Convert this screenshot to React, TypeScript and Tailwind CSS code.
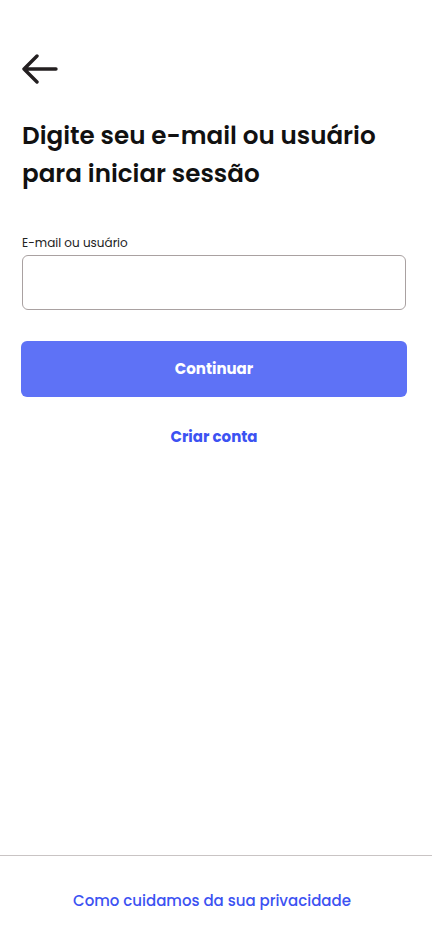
export default function App() {
  return (
    <div className="min-h-screen bg-white flex flex-col font-['Poppins','Inter',sans-serif] text-[#111]">
      <div className="flex-1 pl-[21px] pr-[25px] pt-[54px]">
        <button className="block w-[36px] h-[32px] ml-[1px]" aria-label="Voltar">
          <svg width="36" height="32" viewBox="0 0 36 32" fill="none">
            <path
              d="M2 15h32M15 2L2 15l13 13"
              stroke="#231f20"
              strokeWidth="3.4"
              strokeLinecap="round"
              strokeLinejoin="round"
            />
          </svg>
        </button>

        <h1 className="mt-[31px] ml-[1px] text-[24.6px] leading-[38px] font-semibold">
          Digite seu e-mail ou usuário
          <br />
          para iniciar sessão
        </h1>

        <label className="block mt-[42px] ml-[1px] text-[12px] leading-[16px] text-[#222]">E-mail ou usuário</label>
        <input
          type="text"
          className="mt-[4px] block w-[calc(100%-2px)] mx-[1px] h-[55px] rounded-[6px] border border-[#a9a1a1] px-3 text-[15px] outline-none"
        />

        <button className="mt-[31px] w-full h-[56px] rounded-[6px] bg-[#5e72f6] text-white text-[15px] font-bold">
          Continuar
        </button>

        <div className="mt-[28px] text-center">
          <a className="text-[15px] font-bold text-[#3c52f2]">Criar conta</a>
        </div>
      </div>

      <div className="border-t border-[#c9c4c4] h-[92px] flex items-center justify-center pr-[8px]">
        <a className="text-[15px] font-medium text-[#3c52f2]">Como cuidamos da sua privacidade</a>
      </div>
    </div>
  );
}
